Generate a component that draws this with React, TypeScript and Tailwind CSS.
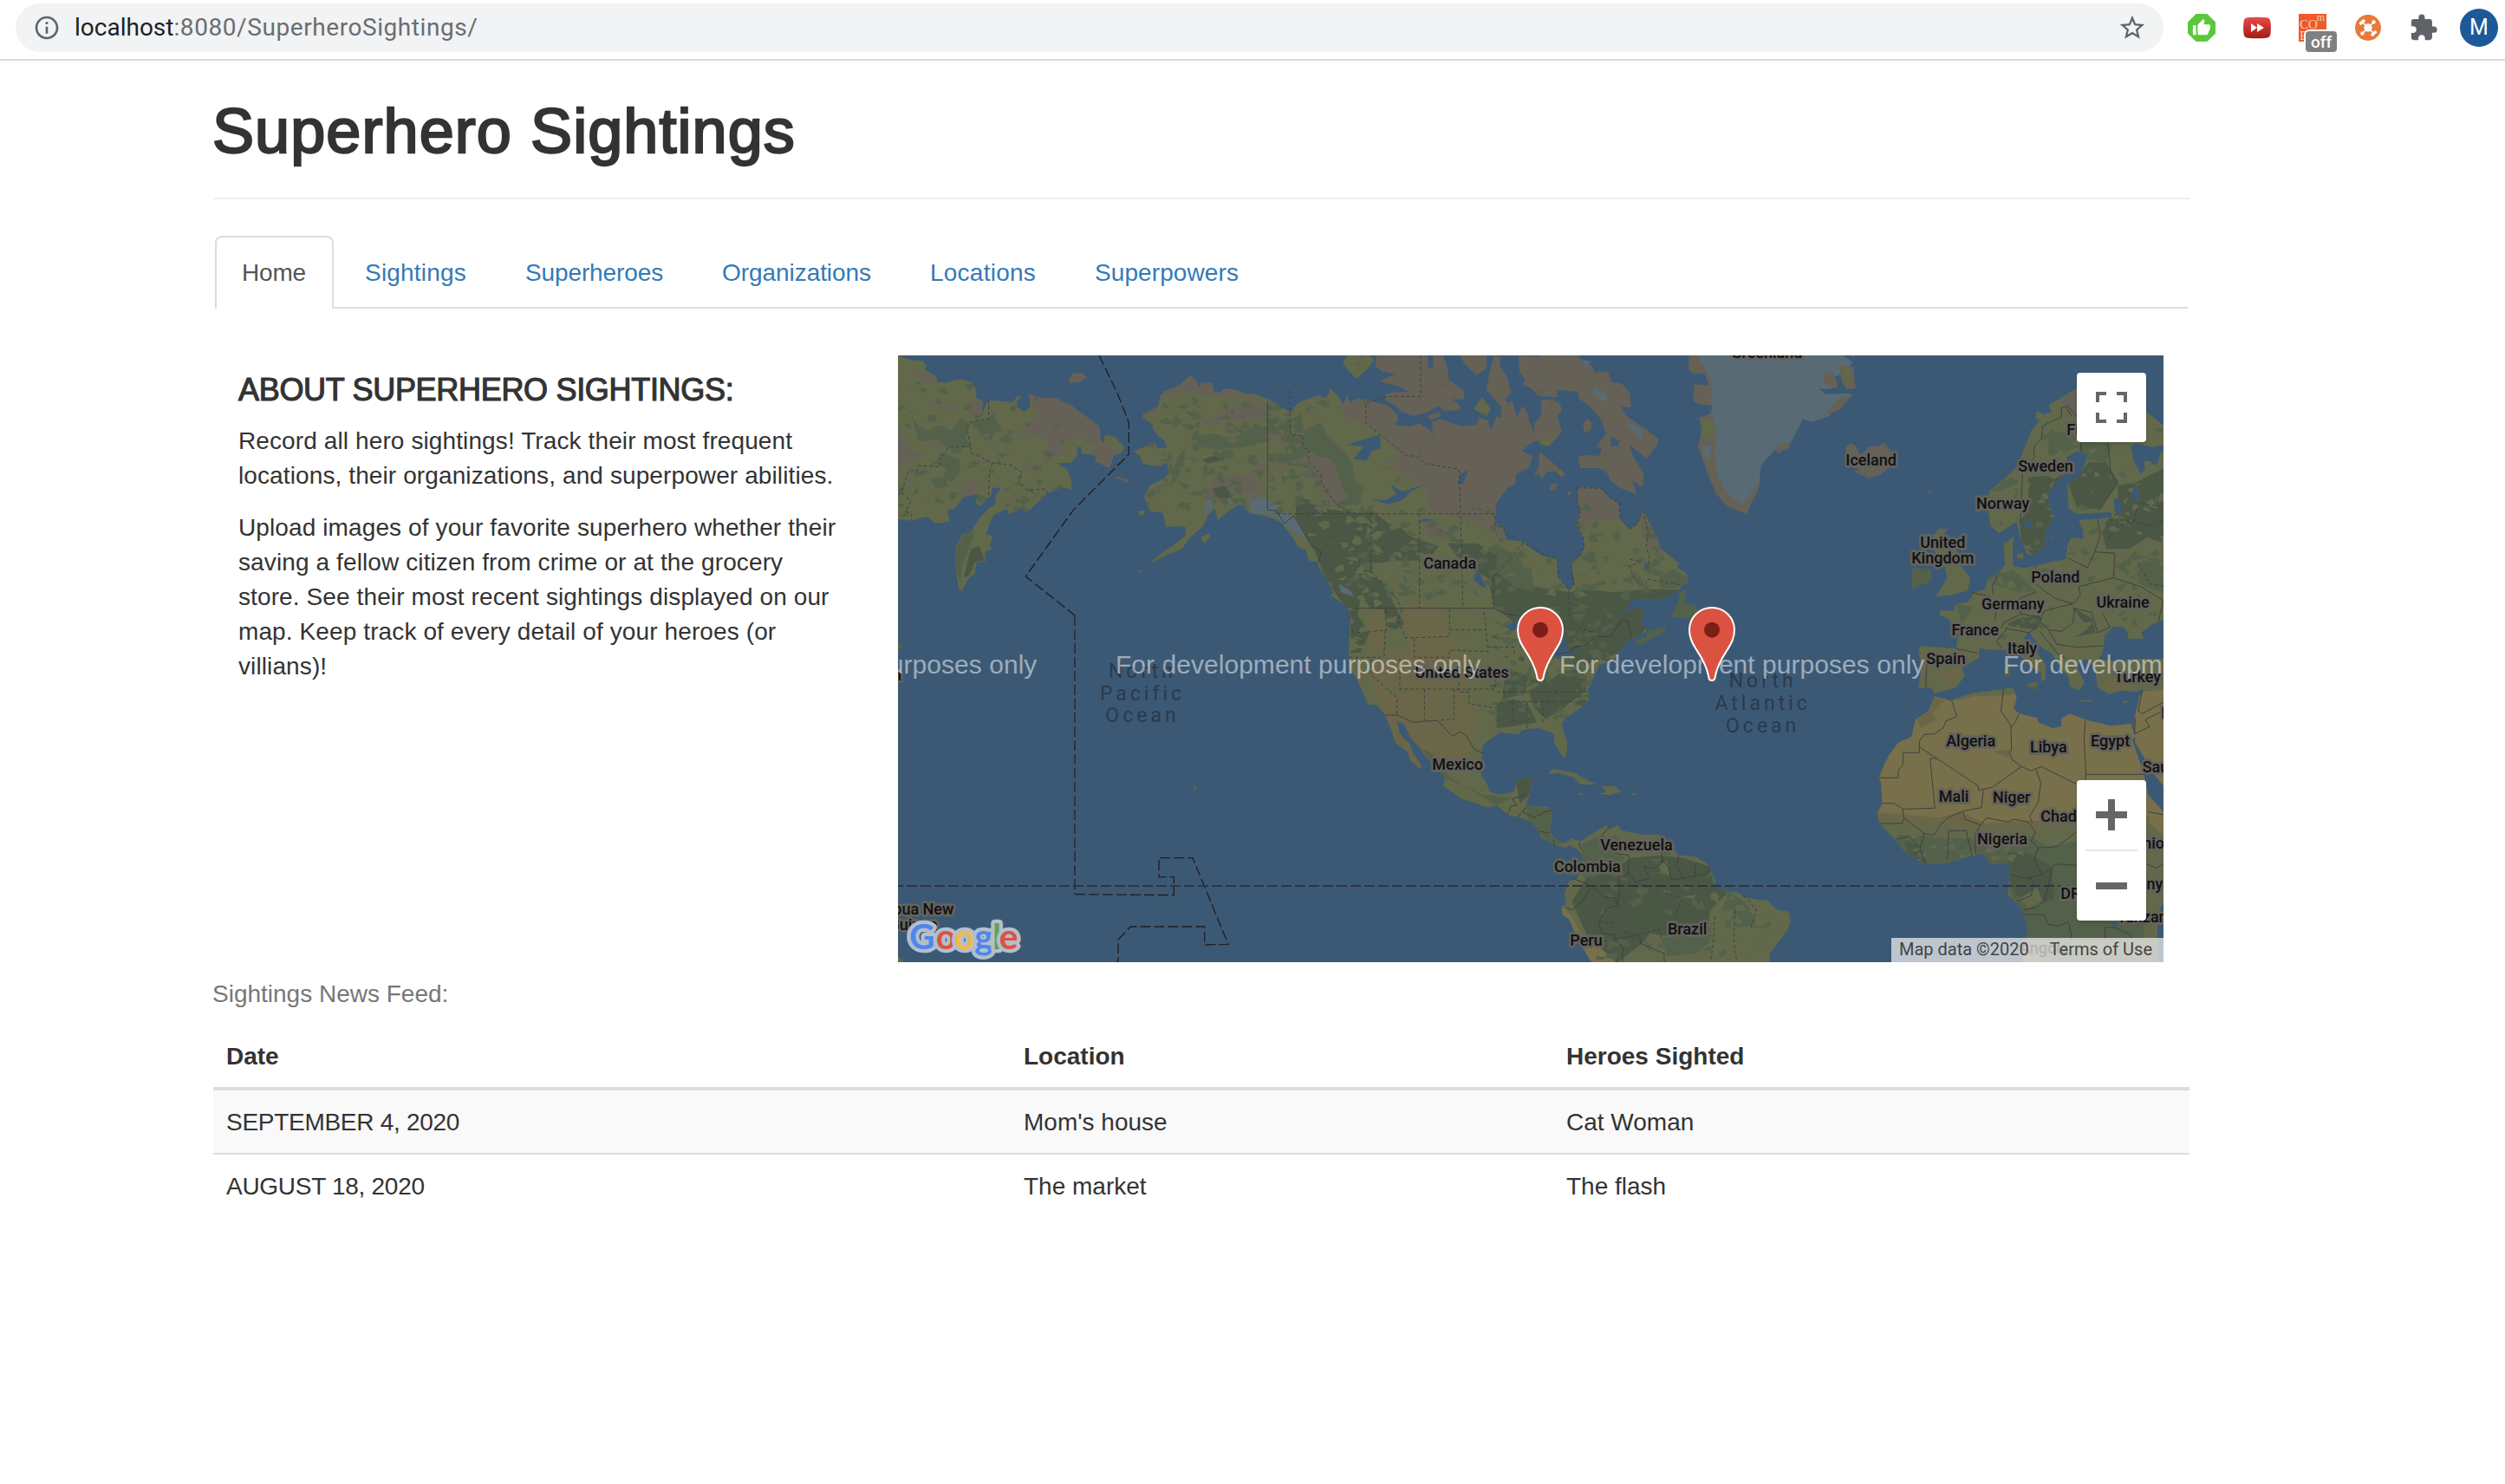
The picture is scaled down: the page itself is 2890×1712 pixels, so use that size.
import { useMemo, type ReactNode } from "react";
import { MdExtension, MdInfoOutline, MdStarBorder, MdThumbUp } from "react-icons/md";

/* Map geometry is kept in thirds of a pixel, grouped in six tiles. */
const TILE = {
  A: [0, 0],
  B: [1500, 0],
  C: [3000, 0],
  D: [0, 1050],
  E: [1500, 1050],
  F: [3000, 1050],
} as const;
type Tile = keyof typeof TILE;

function shape(...parts: [Tile, string][]) {
  return parts
    .map(([t, pts]) =>
      pts
        .trim()
        .split(/\s+/)
        .map((p) => {
          const [x, y] = p.split(",").map(Number);
          return `${x + TILE[t][0]},${y + TILE[t][1]}`;
        })
        .join(" "),
    )
    .join(" ");
}

const OCEAN = "#3b5975";
const GREEN = "#62694b";
const TUNDRA = "#666157";
const FOREST = "#4b5745";
const WOOD = "#54614a";
const TAN = "#6c6649";
const DESERT = "#78704b";
const ICE = "#586b75";

const AMERICA = shape(
  ["A", "865,235 920,205 925,170 940,155 990,135 1030,100 1050,115 1062,140 1070,125 1105,125 1110,155 1130,158 1150,145 1190,150 1215,162 1260,165 1310,187 1345,210 1380,228 1400,195 1470,167 1500,178"],
  ["B", "15,145 35,165 60,200 75,165 80,195 105,180 135,183 215,205 245,235 250,255 235,270 290,277 325,265 370,300 365,260 400,250 420,262 470,275 520,270 530,247 560,255 570,295 578,270 590,240 600,248 635,190 645,190 660,245 680,205 700,235 700,252 720,300 722,265 745,235 745,185 785,182 810,200 815,225 800,240 815,295 770,345 745,340 735,325 715,330 675,360 715,380 700,420 655,440 655,475 630,485 600,525 587,545 585,610 610,622 625,670 680,672 720,705 750,725 800,732 800,790 840,842 860,820 845,745 880,725 895,690 885,650 862,615 880,575 870,530 870,490 890,485 950,490 975,520 1015,545 1018,595 1050,632 1075,615 1095,565 1130,630 1145,660 1160,700 1222,750 1215,760 1250,790 1250,815 1220,840 1180,870 1110,872 1060,875 1020,925 985,955 1050,908 1080,905 1105,910 1090,950 1110,985 1060,1010 1040,1020 1010,1060"],
  ["E", "990,40 945,50 930,85 915,120 905,135 910,170 880,200 830,235 815,255 835,320 830,370 820,372 790,320 788,290 740,270 700,272 675,280 670,292 600,285 545,325 540,345 535,430 555,460 565,490 600,500 650,490 660,450 715,438 705,500 690,540 765,542 782,555 775,630 795,655 825,668 850,652 880,662 915,640 970,605 980,620 1010,607 1025,625 1100,640 1150,638 1180,665 1220,710 1280,715 1325,745 1348,800 1335,812 1375,832 1430,840 1445,855 1500,865"],
  ["F", "25,865 60,900 100,905 107,940 95,975 65,1010 35,1050 35,1085"],
  ["E", "920,1085 900,1050 870,1000 840,930 815,915 817,885 830,880 825,840 840,800 870,790 885,735 883,705 870,690 840,675 830,685 790,675 740,645 740,630 710,595 665,578 630,570 590,538 560,545 520,530 470,515 405,470 410,450 398,425 345,370 325,340 290,300 270,255 245,245 255,290 290,325 300,355 332,400 325,412 290,380 285,355 240,320 225,275 205,225 175,190 145,188 125,140 105,100 80,60 78,0"],
  ["B", "85,930 75,905 45,880 15,860 25,850 0,805"],
  ["A", "1475,765 1470,745 1440,740 1430,705 1400,690 1385,660 1365,635 1340,605 1290,585 1240,578 1200,545 1160,570 1125,600 1115,560 1090,585 1075,620 1030,660 1000,700 950,720 890,750 915,725 980,680 1012,655 1015,625 985,620 945,625 935,575 890,570 880,545 870,520 890,480 940,455 955,440 950,400 920,415 865,405 860,385 835,362 905,330 915,350 950,350 940,325 915,305 890,265 865,245"],
);

const SIBERIA = shape(["A", "18,30 60,45 105,50 117,68 110,80 150,102 155,122 185,125 215,115 245,113 275,125 290,150 288,178 312,190 310,235 325,195 335,185 415,192 430,172 447,172 430,185 430,208 455,225 475,210 472,165 510,177 565,177 620,205 715,275 720,325 732,332 733,305 770,312 802,350 790,370 765,375 750,420 703,398 700,375 655,370 650,345 637,350 640,375 615,403 568,402 605,425 620,465 618,495 585,487 540,505 495,545 460,575 445,560 400,580 395,560 350,582 340,600 322,650 345,655 335,690 345,700 318,710 322,745 290,745 285,785 262,800 240,845 228,840 217,760 217,695 240,650 270,640 295,600 330,560 355,548 355,515 375,490 345,487 340,515 300,552 288,540 292,512 245,520 215,560 190,565 197,605 150,612 115,587 65,602 45,600 18,598"]);

const EUROPE = shape(
  ["C", "795,500 850,455 895,410 915,355 940,290 970,255 955,245 958,222 985,235 1010,225 1000,200 1045,177 1070,160 1100,145 1340,225 1400,275 1400,340 1360,347 1300,335 1285,345 1295,395 1320,440 1335,425 1330,395 1350,395 1365,410 1380,400 1385,370 1400,360 1400,1080"],
  ["F", "1400,140 1320,138 1300,145 1250,140 1210,153 1170,130 1160,60 1130,30 1095,50 1125,115 1105,140 1075,125 1070,95 1040,60 1010,10"],
  ["C", "980,1045 950,1010 930,985 915,1010 960,1060 985,1090"],
  ["F", "990,60 990,100 975,110 975,80 930,50 895,10"],
  ["C", "860,1050 790,1048 760,1045 760,1080"],
  ["F", "755,30 700,60 710,90 680,130 605,150 595,130 550,132 560,60 550,0"],
  ["C", "545,1055 560,1035 680,1045 690,990 650,940 625,930 625,912 670,915 680,890 720,885 745,850 780,840 790,805 825,785 850,755 845,685 880,655 875,720 880,760 910,765 950,760 1010,745 1060,735 1065,690 1080,660 1120,665 1120,640 1105,600 1170,595 1220,590 1215,572 1100,580 1070,560 1065,480 1110,440 1130,395 1135,375 1100,360 1065,380 1055,440 1000,500 1000,540 1020,590 990,640 985,695 945,725 925,715 905,670 890,605 830,645 800,620 790,560"],
);

const AFRICA = shape(["F", "605,160 660,175 735,150 845,135 875,130 890,165 880,205 900,220 960,235 965,250 1015,270 1045,265 1045,235 1075,220 1125,240 1215,262 1285,255 1300,300 1290,310 1320,400 1335,450 1345,500 1398,560 1398,865 1375,930 1380,1080 910,1080 930,960 905,890 860,845 865,800 870,755 850,735 800,742 775,705 725,712 660,735 575,742 500,695 475,660 415,600 408,562 425,530 420,460 413,440 430,400 450,360 480,320 525,300 540,240 585,210 600,175"]);
const ARABIA = shape(["F", "1315,160 1330,140 1398,138 1398,470 1365,430 1335,380 1300,320 1297,240"]);

const ISLANDS: [string, string][] = [
  [TUNDRA, shape(["A", "608,115 625,92 655,90 672,105 645,122 612,126"])],
  [TUNDRA, shape(["A", "772,447 815,460 808,472 790,458 772,457"])],
  [GREEN, shape(["A", "845,570 868,567 874,580 858,583"])],
  [GREEN, shape(["A", "1065,660 1095,645 1098,660 1078,680"])],
  [GREEN, shape(["A", "848,773 862,775 850,783"])],
  [WOOD, shape(["A", "18,1020 38,1035 20,1050"])],
  [GREEN, shape(["B", "75,30 150,30 165,45 145,75 105,110 70,75 57,55"])],
  [TUNDRA, shape(["B", "175,30 350,30 355,75 370,72 370,30 405,30 420,75 425,115 475,150 478,180 440,185 465,205 460,220 410,222 385,205 355,225 300,240 260,225 240,205 205,185 205,165 240,155 290,158 250,135 215,130 185,118 240,95 195,85 170,70"])],
  [TUNDRA, shape(["B", "460,30 555,30 555,75 520,100 480,60"])],
  [TUNDRA, shape(["B", "580,30 605,35 600,65 625,100 640,160 620,180 635,210 605,235 605,205 590,190 555,150 565,90"])],
  [GREEN, shape(["B", "540,175 570,215 555,240 510,215"])],
  [TUNDRA, shape(["B", "350,240 395,222 395,240 365,255"])],
  [TUNDRA, shape(["B", "665,30 735,35 752,90 735,30 875,30 885,55 920,65 930,90 975,85 985,120 1025,130 1050,160 1055,210 1020,208 1040,240 1105,285 1150,320 1145,340 1110,387 1050,340 1060,375 1100,440 1095,485 1060,465 1075,510 1020,490 980,460 975,440 950,420 880,420 870,380 905,375 945,378 955,355 935,345 970,300 950,250 905,200 875,180 870,155 800,150 800,175 735,170 710,145 680,130 690,115 670,90"])],
  [TUNDRA, shape(["B", "888,265 905,250 920,265 915,290 895,297"])],
  [TUNDRA, shape(["B", "740,365 755,375 805,420 830,440 815,452 790,430 760,435 745,462 740,440 720,445 735,415"])],
  [TUNDRA, shape(["B", "780,475 802,475 790,495 772,495"])],
  [TUNDRA, shape(["B", "835,500 848,503 840,518"])],
  [WOOD, shape(["B", "1248,838 1240,885 1285,898 1290,940 1190,938 1215,890 1225,850"])],
  [WOOD, shape(["B", "1070,1020 1110,1000 1110,985 1150,975 1178,960 1175,985 1130,1010 1080,1035"])],
  [GREEN, shape(["E", "765,430 785,410 860,425 885,440 935,465 880,465 855,440 805,425"])],
  [GREEN, shape(["E", "950,470 1000,472 1022,490 980,502 945,497 970,490"])],
  [GREEN, shape(["E", "870,495 895,499 880,504"])],
  [GREEN, shape(["E", "1057,496 1078,497 1075,502 1058,502"])],
  [GREEN, shape(["D", "1042,467 1055,480 1042,480"])],
  [GREEN, shape(["D", "18,1058 40,1080 18,1080"])],
  [TUNDRA, shape(["C", "298,350 315,333 335,345 345,372 355,370 380,345 410,345 430,332 470,380 460,410 420,440 380,455 325,432 345,425 305,400"])],
  [GREEN, shape(["C", "610,865 650,800 640,760 600,700 600,655 620,630 650,630 635,655 680,700 700,765 730,800 720,845 660,860"])],
  [WOOD, shape(["C", "530,765 595,770 595,810 530,838 525,820"])],
  [GREEN, shape(["C", "583,496 593,498 588,508"])],
  [WOOD, shape(["C", "890,718 912,715 915,735 895,738"])],
  [WOOD, shape(["C", "1012,655 1023,650 1015,675"])],
  [WOOD, shape(["F", "918,118 965,110 955,140"])],
  [WOOD, shape(["F", "848,60 868,45 865,95 845,90"])],
  [GREEN, shape(["F", "1108,173 1150,173 1148,178 1110,178"])],
  [GREEN, shape(["F", "1255,178 1283,172 1265,184"])],
];

const GREENLAND: [string, string][] = [
  [TUNDRA, shape(["B", "1255,30 1290,30 1345,110 1350,200 1345,240 1360,285 1355,335 1350,370 1375,440 1405,515 1440,540 1480,480 1500,460 1500,480 1478,530 1455,580 1430,570 1385,548 1350,510 1320,440 1300,380 1287,345 1300,290 1290,245 1325,235 1338,205 1310,200 1290,200 1270,185 1275,130 1325,135 1310,90 1275,95 1255,80"])],
  [ICE, shape(["B", "1283,30 1310,75 1335,120 1335,210 1340,240 1350,290 1345,370 1355,440 1378,490 1405,520 1440,545 1475,500 1500,460"], ["C", "5,410 50,360 110,330 150,250 185,260 240,240 270,200 320,165 230,150 265,140 250,110 290,90 320,60 325,30"])],
  [TUNDRA, shape(["C", "215,95 250,85 270,130 265,145 225,130"])],
  [TUNDRA, shape(["C", "275,65 325,70 332,145 300,148 285,120"])],
  [GREEN, shape(["C", "280,75 305,70 315,110 300,140 285,110"])],
  [TUNDRA, shape(["C", "322,165 280,215 220,243 250,205 275,180"])],
  [TUNDRA, shape(["C", "60,335 108,330 100,350 60,370"])],
  [GREEN, shape(["B", "1305,250 1345,260 1350,300 1320,330 1300,300"])],
  [ICE, shape(["B", "1305,340 1335,345 1325,390 1305,370"])],
  [OCEAN, shape(["C", "290,30 325,55 320,30"])],
  [OCEAN, shape(["C", "205,145 280,150 330,152 320,160 230,165"])],
];

/* Vegetation zones, painted inside the land mask. */
const ZONES: [string, string][] = [
  [TUNDRA, shape(["A", "75,85 150,102 155,130 100,118"])],
  [TUNDRA, shape(["A", "265,185 312,190 305,235 265,228"])],
  [TUNDRA, shape(["A", "472,165 565,177 620,205 715,275 718,330 690,340 640,310 600,330 560,335 510,310 435,288 480,260 510,235 480,205"])],
  [TUNDRA, shape(["A", "700,345 725,330 760,350 790,372 765,375 750,420 703,398"])],
  [TUNDRA, shape(["A", "18,310 60,340 75,365 45,400 18,420"])],
  [TUNDRA, shape(["A", "540,325 580,315 590,350 560,380 530,400"])],
  [TUNDRA, shape(["A", "235,500 260,470 290,460 292,512 240,522"])],
  [WOOD, shape(["A", "65,240 85,270 120,290 165,270 200,290 240,245 262,265 255,320 275,345 230,350 190,350 150,320 105,330 80,300"])],
  [WOOD, shape(["A", "270,262 330,250 348,230 365,265 380,290 350,300 340,325 318,320 290,285"])],
  [WOOD, shape(["A", "165,365 230,390 235,430 205,470 175,450 185,425 150,400"])],
  [WOOD, shape(["A", "130,460 180,450 195,480 150,492"])],
  [WOOD, shape(["A", "217,700 250,645 285,640 240,760 235,820 220,780"])],
  [FOREST, shape(["A", "270,700 300,690 320,740 285,745 265,790 245,800"])],
  [TUNDRA, shape(["A", "865,235 930,165 1030,100 1100,125 1150,145 1215,165 1190,178 1080,170 1020,155 940,170 920,215 870,250"])],
  [TUNDRA, shape(["A", "1060,260 1130,235 1180,205 1235,190 1310,195 1345,215 1270,245 1160,260 1090,270"])],
  [TUNDRA, shape(["A", "1070,500 1110,460 1180,440 1260,460 1300,500 1250,500 1180,515 1120,510 1085,540"])],
  [WOOD, shape(["A", "1050,310 1110,300 1180,320 1230,285 1320,270 1345,300 1290,330 1200,350 1120,355 1060,345"])],
  [FOREST, shape(["A", "1070,390 1150,365 1145,390 1090,405"])],
  [WOOD, shape(["A", "960,480 985,380 1015,350 1005,420 975,470"])],
  [FOREST, shape(["A", "1105,490 1150,480 1175,520 1130,535"])],
  [ICE, shape(["A", "1080,540 1110,520 1100,570 1085,580"])],
  [ICE, shape(["A", "1150,535 1200,525 1230,545 1230,560 1190,545"])],
  [ICE, shape(["A", "1235,505 1300,530 1345,560 1395,600 1440,650 1490,700 1470,705 1430,665 1360,620 1310,580 1240,575"])],
  [WOOD, shape(["A", "1390,250 1410,225 1425,290 1480,260 1500,300 1560,360 1590,400 1600,480 1620,540 1540,560 1500,480 1440,420 1300,400 1300,370 1390,370 1350,330 1390,300"])],
  [TUNDRA, shape(["A", "1370,400 1440,375 1530,390 1570,430 1575,500 1530,520 1490,480 1440,410"])],
  [FOREST, shape(["A", "1395,520 1440,530 1500,570 1500,810 1470,730 1395,590"])],
  [FOREST, shape(["B", "-10,560 120,575 150,560 200,600 250,620 300,660 390,690 350,740 250,740 160,750 160,790 200,820 270,960 240,980 190,960 150,900 120,860 110,930 150,990 120,1060 85,1060 85,930 0,805"])],
  [TUNDRA, shape(["B", "50,200 80,180 135,183 215,205 250,250 325,265 420,255 530,247 640,180 815,182 815,300 720,330 720,420 655,475 587,545 587,620 490,600 400,580 360,570 345,490 290,460 210,400 260,380 190,300 120,260 70,250"])],
  [TUNDRA, shape(["B", "870,485 950,488 1020,545 1010,600 940,600 890,640 860,620"])],
  [TUNDRA, shape(["B", "1090,570 1140,650 1170,710 1150,730 1110,690 1090,640"])],
  [TUNDRA, shape(["B", "500,590 585,580 625,670 580,650"])],
  [TUNDRA, shape(["B", "330,600 400,620 420,660 360,665"])],
  [TUNDRA, shape(["B", "-30,380 40,410 80,520 30,545 -40,480"])],
  [WOOD, shape(["B", "0,340 60,370 90,450 130,490 110,560 60,500 30,410"])],
  [FOREST, shape(["B", "420,680 520,680 600,720 700,770 720,830 840,850 900,840 1000,850 1100,840 1220,840 1060,1030 1010,1060 870,1110 760,1060 620,930 580,900 560,800 480,760"])],
  [WOOD, shape(["B", "590,690 640,710 710,770 720,850 650,830 590,780"])],
  [WOOD, shape(["B", "1150,800 1200,770 1250,800 1240,830 1160,840"])],
  [TUNDRA, shape(["B", "205,80 330,60 330,160 240,150"])],
  [TAN, shape(["B", "130,905 200,910 215,990 190,1060 140,1060 150,970"])],
  [TAN, shape(["B", "270,900 330,880 400,920 420,1000 470,1060 500,1110 480,1200 500,1300 350,1400 280,1290 180,1230 150,1130 200,1050 300,1050 270,970"])],
  [TAN, shape(["E", "190,190 300,210 440,240 530,200 490,380 450,440 380,400 330,340 250,280 300,350 330,410 290,380 240,320"])],
  [FOREST, shape(["E", "590,180 650,170 700,190 730,250 640,265 590,270"])],
  [FOREST, shape(["E", "700,140 760,110 840,70 900,90 900,140 820,200 760,240 720,200"])],
  [FOREST, shape(["E", "620,60 700,90 690,150 610,170"])],
  [WOOD, shape(["E", "330,340 370,360 430,440 540,500 640,510 590,540 480,470 400,440"])],
  [FOREST, shape(["E", "655,450 715,438 705,500 670,530"])],
  [WOOD, shape(["E", "690,540 782,548 775,640 850,660 790,680 700,600"])],
  [WOOD, shape(["E", "885,670 960,640 1000,700 1040,720 900,800 880,760"])],
  [FOREST, shape(["E", "900,790 1000,760 1050,720 1150,710 1240,720 1330,750 1340,810 1390,840 1330,900 1320,970 1250,1000 1120,980 1100,1010 1010,1080 950,1080 890,960 850,870"])],
  [WOOD, shape(["E", "1160,1000 1330,960 1340,1000 1280,1050 1180,1060"])],
  [DESERT, shape(["E", "815,885 850,920 880,980 960,1040 1010,1085 920,1085 870,1000 820,915"])],
  [GREEN, shape(["E", "1150,740 1180,730 1190,780 1160,775"])],
  [GREEN, shape(["E", "1225,855 1285,845 1270,860"])],
  [WOOD, shape(["E", "1390,840 1450,870 1500,960 1420,960 1370,900"])],
  [FOREST, shape(["C", "930,450 1060,445 1000,540 1020,590 985,695 945,725 905,670 900,600 930,570"])],
  [FOREST, shape(["C", "1070,480 1140,400 1200,400 1240,470 1180,560 1100,560"])],
  [FOREST, shape(["C", "1240,480 1300,470 1400,420 1400,680 1340,660 1280,700 1200,700 1180,620 1240,570"])],
  [WOOD, shape(["C", "1000,290 1100,300 1220,340 1200,400 1130,390 1100,350 1000,380"])],
  [TUNDRA, shape(["C", "1040,190 1100,145 1100,240 1060,210"])],
  [WOOD, shape(["C", "800,500 870,450 900,470 830,500"])],
  [WOOD, shape(["C", "780,800 850,760 900,790 960,850 900,850 830,830"])],
  [WOOD, shape(["C", "680,890 740,900 700,960"])],
  [FOREST, shape(["C", "850,960 900,940 970,930 960,980 880,970"])],
  [FOREST, shape(["C", "1080,900 1150,940 1165,990 1090,1005 1140,975"])],
  [WOOD, shape(["C", "1230,760 1300,720 1400,740 1400,850 1330,830"])],
  [TAN, shape(["F", "630,80 690,60 690,110 640,120"])],
  [TAN, shape(["F", "1200,100 1300,115 1290,135 1210,140"])],
];

const AFRICA_ZONES: [string, string][] = [
  [GREEN, shape(["F", "660,175 735,150 845,135 880,130 880,155 740,160 690,175"])],
  [TAN, shape(["F", "605,160 640,175 600,215 610,240 560,270 545,245"])],
  [TAN, shape(["F", "400,560 500,570 620,580 700,560 780,600 940,590 1100,590 1260,560 1398,580 1398,1080 400,1080"])],
  [GREEN, shape(["F", "400,585 500,590 600,610 760,620 940,620 1100,600 1240,600 1300,640 1398,600 1398,1080 400,1080"])],
  [WOOD, shape(["F", "470,640 540,640 620,650 760,650 930,640 1000,680 1100,660 1240,680 1330,760 1330,1000 900,1000 860,800 500,800"])],
  [FOREST, shape(["F", "860,700 930,700 1010,750 1020,860 960,880 890,850 860,780"])],
  [FOREST, shape(["F", "500,660 560,680 580,740 520,710"])],
  [GREEN, shape(["F", "900,860 960,820 980,870 930,890"])],
  [DESERT, shape(["F", "910,1060 960,1050 1000,1085 900,1085"])],
  [DESERT, shape(["F", "1345,560 1398,560 1398,640 1350,600"])],
  [TAN, shape(["F", "810,350 870,345 860,372"])],
];

const LAKES = [
  shape(["B", "70,340 130,320 185,305 190,350 160,360 140,395 95,388 130,345"]),
  shape(["B", "155,528 205,530 245,510 220,478 265,500 340,478 295,500 265,530 215,545"]),
  shape(["B", "305,622 335,595 385,600 330,607"]),
  shape(["B", "455,475 465,440 492,425 475,475"]),
  shape(["B", "510,790 530,780 555,838 530,825 515,810"]),
  shape(["B", "510,835 530,870 518,860"]),
  shape(["B", "520,548 545,570 530,565"]),
  shape(["B", "620,965 700,935 720,950 640,985"]),
  shape(["B", "1185,985 1100,930 1150,930 1165,950"]),
  shape(["B", "820,990 840,1060 890,1040 840,1070 790,1075"]),
  shape(["B", "985,312 1015,325 1010,345 985,345"]),
  shape(["B", "1100,750 1112,745 1112,770"]),
  shape(["B", "385,810 400,790 395,805"]),
  shape(["C", "1190,1045 1195,1000 1225,968 1260,970 1275,990 1275,1010 1330,1010 1320,990 1360,960 1398,945 1398,1080 1190,1080"]),
  shape(["F", "1175,30 1190,0 1398,0 1398,25 1300,30 1240,40"]),
  shape(["C", "1225,520 1255,540 1250,578 1230,575"]),
  shape(["C", "1295,475 1318,510 1300,540 1288,520"]),
  shape(["C", "910,605 940,600 940,625 915,630"]),
  shape(["F", "695,675 705,675 703,700"]),
  shape(["F", "1218,940 1240,950 1230,970"]),
];
const ICECAPS = [
  shape(["B", "925,140 970,165 975,190 950,185 930,165"]),
  shape(["B", "1040,262 1090,285 1090,320 1065,300"]),
  shape(["B", "880,45 915,50 900,75"]),
  shape(["B", "45,820 85,845 95,865 50,850"]),
  shape(["B", "195,815 215,835 210,845"]),
];

const DASHED = [
  shape(["A", "332,185 332,248 265,262 258,290 270,345 268,365 345,402 410,410 447,435 435,470 465,497 530,492 535,510"]),
  shape(["A", "345,402 335,430 332,515"]),
  shape(["A", "270,345 195,348 165,385 165,415 88,412 85,428 55,428 30,505 62,535 45,570 65,578 65,600"]),
  shape(["A", "1373,150 1376,305 1418,308 1423,350 1440,355 1440,400 1482,440 1485,470 1500,500"]),
  shape(["A", "1500,500 1535,545 1590,578"]),
  shape(["B", "327,30 327,172 210,172 137,195 137,265 280,378 310,378 345,405 460,424 465,578 473,905"]),
  shape(["A", "1330,578 2083,578 2085,615 2112,625 2128,648 2185,680 2245,715 2298,732"]),
  shape(["B", "155,578 155,775 240,865 262,910"]),
  shape(["B", "323,578 323,905"]),
  shape(["B", "683,680 578,798 578,905"]),
  shape(["B", "870,488 868,535 880,580 865,615 888,650 893,690 880,722 845,748 858,825 840,840 805,800 800,735"]),
  shape(["B", "870,488 950,490 1015,545 1018,595 1050,630 1075,615 1095,568 1115,640 1108,690 1120,735 1113,770"]),
  shape(["B", "840,842 842,940 880,975 930,990"]),
  shape(["B", "1050,735 1090,745 1050,760 1065,800 1100,830 1115,805 1230,825"]),
  shape(["B", "85,985 120,990 210,980 205,910"]),
  shape(["B", "205,980 200,1075"]),
  shape(["B", "262,910 250,950 275,1008 427,1003 427,905"]),
  shape(["B", "427,980 555,980 545,905"]),
  shape(["B", "305,1008 305,1075 427,1075 427,1050 560,1055 553,980"]),
  shape(["B", "560,1040 650,1040 650,1062"]),
  shape(["E", "80,25 190,25"]),
  shape(["E", "155,30 155,85 245,165 245,225"]),
  shape(["E", "255,30 255,135 585,135 585,75"]),
  shape(["E", "340,135 340,248"]),
  shape(["E", "443,135 443,240 385,242"]),
  shape(["E", "460,70 460,145 495,145 495,185 590,200"]),
  shape(["E", "590,145 905,145"]),
  shape(["E", "640,178 860,178"]),
  shape(["E", "695,178 695,270"]),
  shape(["E", "748,178 750,255"]),
  shape(["E", "645,180 645,250"]),
  shape(["E", "1130,800 1170,840 1230,860 1205,930"]),
  shape(["E", "945,938 1000,945 1030,975 1080,985 1150,965 1160,995"]),
  shape(["E", "1345,920 1340,1010 1330,1080"]),
  shape(["E", "1415,900 1410,1000 1420,1070"]),
  shape(["E", "1445,850 1490,900 1470,960"]),
  shape(["C", "1210,600 1300,600 1310,540 1398,555"]),
  shape(["C", "1210,660 1240,620 1300,605 1350,620 1398,600"]),
  shape(["C", "1310,750 1350,820 1398,830"]),
];

const SOLID = [
  shape(["A", "1297,187 1297,565 1328,567 1355,612 1388,585 1450,690 1483,708 1473,745"]),
  shape(["B", "95,905 578,905 620,925 665,930"]),
  shape(["B", "790,1065 850,1055 855,1040 895,1035 930,1003 985,1003 1022,947 1045,950 1058,1010"]),
  shape(["E", "205,225 245,225 300,250 385,243 410,270 437,298 462,283 483,292 513,345 543,357"]),
  shape(["E", "630,565 640,540 660,538 643,515 690,500"]),
  shape(["E", "665,578 690,545 680,560 720,580 755,560 780,555"]),
  shape(["E", "740,628 772,632"]),
  shape(["E", "785,655 792,678"]),
  shape(["E", "875,665 882,690"]),
  shape(["E", "980,610 955,640 960,670 1010,705 1048,710 1045,780 1012,785 1015,815 1010,885 975,892 942,940 955,980 1000,985 1000,1000 1028,1030 1025,1080"]),
  shape(["E", "855,790 915,815 965,855 1005,860 1005,880"]),
  shape(["E", "915,825 890,865 850,900 830,890"]),
  shape(["E", "1048,770 1070,803 1118,790 1100,748 1130,758 1165,735 1160,700"]),
  shape(["E", "1165,730 1185,750 1195,795 1320,775 1325,745"]),
  shape(["E", "1220,712 1212,748 1235,785"]),
  shape(["E", "1277,745 1277,785"]),
  shape(["E", "1000,1000 1085,985 1088,1015 1170,1050 1170,1080"]),
  shape(["C", "903,610 910,440 950,385 950,345 975,320 980,275 1010,258 1045,245 1045,210 1065,205 1110,255 1113,365"]),
  shape(["C", "1060,210 1080,240"]),
  shape(["C", "1205,330 1215,430 1240,470 1175,565"]),
  shape(["C", "1170,595 1180,650 1160,710 1135,765 1065,730"]),
  shape(["C", "1160,710 1230,715 1225,800 1105,830 1110,860 1085,890"]),
  shape(["C", "1225,800 1320,830 1398,880 1380,950"]),
  shape(["C", "955,760 955,820 1020,870 1085,890 1040,900 985,915"]),
  shape(["C", "955,850 900,870 905,925 845,955 835,975"]),
  shape(["C", "735,850 800,865 820,900 815,945"]),
  shape(["C", "825,790 805,830 810,860"]),
  shape(["C", "985,915 970,950 1000,980 1045,985 1085,955 1090,905"]),
  shape(["C", "905,925 970,935 970,960 935,990 850,975"]),
  shape(["C", "1085,905 1150,920 1170,990 1213,970 1185,920"]),
  shape(["C", "1000,980 1030,1030 1100,1040 1190,1035"]),
  shape(["C", "970,985 1030,1060 1060,1080"]),
  shape(["C", "680,1045 755,1060"]),
  shape(["C", "860,970 820,1020 840,1045"]),
  shape(["F", "580,25 575,130"]),
  shape(["F", "665,175 683,230 645,245 635,270 605,290 570,292 553,315 553,335 757,470 757,485"]),
  shape(["F", "553,335 553,355 497,355 495,400 480,415 480,442 413,442"]),
  shape(["F", "615,375 590,375 607,547 498,550 465,530 425,530"]),
  shape(["F", "757,485 805,475 907,403 940,418 975,403 1100,465"]),
  shape(["F", "845,135 835,210 870,260 872,345 865,355 875,380 907,403"]),
  shape(["F", "898,218 885,250 868,270"]),
  shape(["F", "1128,245 1123,300 1130,430 1335,430"]),
  shape(["F", "1128,430 1128,455"]),
  shape(["F", "958,415 973,460 965,525 935,575 945,600"]),
  shape(["F", "775,485 768,545 705,557 655,578 625,605 605,640 570,635 500,580 495,550"]),
  shape(["F", "705,560 710,585 765,605 785,580 860,595 880,585 930,595 955,630 940,660 965,685 1030,680 1095,630"]),
  shape(["F", "765,605 745,640 748,705"]),
  shape(["F", "655,625 650,725"]),
  shape(["F", "655,625 715,625 735,710"]),
  shape(["F", "570,635 555,690 575,740"]),
  shape(["F", "475,655 520,645 550,680"]),
  shape(["F", "415,600 495,600 500,580"]),
  shape(["F", "965,685 950,720 978,778 925,790 870,778"]),
  shape(["F", "925,785 950,800 940,850 890,870"]),
  shape(["F", "978,778 1010,755 1020,740 1098,745"]),
  shape(["F", "1015,755 985,870 960,890 910,900"]),
  shape(["F", "915,915 985,915 1000,950 1035,955 1070,940 1080,995"]),
  shape(["F", "1195,1000 1195,960 1230,960 1285,985 1285,1000"]),
  shape(["F", "1325,140 1310,210 1325,220 1398,180"]),
  shape(["F", "1300,235 1298,290 1350,265 1335,240 1398,210"]),
  shape(["F", "1345,560 1398,570"]),
  shape(["F", "1340,740 1375,755 1398,740"]),
];

const DATELINE = shape(["A", "714,30 775,155 817,262 817,372 625,565 460,795 630,930"]);
const EXCLAVE = shape(["D", "630,845 973,848 973,785 921,785 921,719 1038,719 1161,1018 1079,1020 1079,957 823,957 780,1002 780,1075 770,1085"]);

const LABELS: [Tile, number, number, string, ("start" | "middle" | "end")?][] = [
  ["B", 1525, 40, "Greenland"],
  ["C", 386, 411, "Iceland"],
  ["C", 990, 432, "Sweden"],
  ["C", 842, 562, "Norway"],
  ["C", 634, 697, "United"],
  ["C", 634, 751, "Kingdom"],
  ["C", 1024, 817, "Poland"],
  ["C", 877, 909, "Germany"],
  ["C", 1257, 904, "Ukraine"],
  ["C", 746, 999, "France"],
  ["C", 909, 1063, "Italy"],
  ["C", 1063, 305, "Finland", "start"],
  ["F", 645, 48, "Spain"],
  ["F", 1308, 112, "Turkey"],
  ["F", 731, 334, "Algeria"],
  ["F", 1000, 354, "Libya"],
  ["F", 1214, 332, "Egypt"],
  ["F", 672, 526, "Mali"],
  ["F", 872, 529, "Niger"],
  ["F", 973, 595, "Chad", "start"],
  ["F", 840, 673, "Nigeria"],
  ["F", 1042, 860, "DRC", "start"],
  ["F", 1325, 422, "Saudi", "start"],
  ["F", 1278, 688, "Ethiopia", "start"],
  ["F", 1277, 827, "Kenya", "start"],
  ["F", 1237, 943, "Tanzania", "start"],
  ["F", 1390, 237, "Iraq", "start"],
  ["F", 985, 1050, "Angola"],
  ["B", 428, 767, "Canada"],
  ["E", 470, 95, "United States"],
  ["E", 455, 415, "Mexico"],
  ["E", 1074, 693, "Venezuela"],
  ["E", 904, 768, "Colombia"],
  ["E", 1250, 983, "Brazil"],
  ["E", 900, 1023, "Peru"],
  ["D", 211, 915, "Papua New", "end"],
  ["D", 155, 968, "Guinea", "end"],
  ["D", 30, 105, "Japan", "end"],
];

const SEAS: [Tile, number, number, string][] = [
  ["D", 864, 95, "North"],
  ["D", 864, 173, "Pacific"],
  ["D", 864, 250, "Ocean"],
  ["E", 1511, 130, "North"],
  ["E", 1511, 208, "Atlantic"],
  ["E", 1511, 286, "Ocean"],
];

/* Small relief facets: [x, y, w, h, count, size, colour]. */
const RELIEF: [number, number, number, number, number, number, string][] = [
  [18, 90, 600, 500, 60, 22, WOOD],
  [18, 90, 780, 500, 45, 22, TUNDRA],
  [870, 170, 640, 400, 110, 24, WOOD],
  [870, 170, 640, 400, 40, 20, TUNDRA],
  [1380, 500, 300, 550, 60, 22, GREEN],
  [1560, 560, 900, 300, 120, 22, WOOD],
  [1560, 560, 900, 300, 60, 20, GREEN],
  [1600, 900, 500, 400, 60, 24, GREEN],
  [1600, 30, 1000, 450, 50, 20, "#625e50"],
  [2080, 900, 420, 380, 110, 22, WOOD],
  [2080, 1000, 420, 300, 40, 22, FOREST],
  [2350, 600, 400, 260, 40, 22, WOOD],
  [2300, 1700, 900, 430, 70, 26, WOOD],
  [2830, 1900, 300, 230, 60, 22, GREEN],
  [3780, 250, 620, 800, 130, 22, GREEN],
  [3780, 250, 620, 800, 80, 20, WOOD],
  [3540, 1050, 700, 120, 30, 18, TAN],
  [3420, 1640, 500, 140, 40, 20, GREEN],
];

function relief() {
  let seed = 7;
  const rnd = () => {
    seed = (seed * 16807) % 2147483647;
    return seed / 2147483647;
  };
  return RELIEF.map(([x, y, w, h, n, s, fill]) => {
    let d = "";
    for (let i = 0; i < n; i++) {
      const cx = x + rnd() * w;
      const cy = y + rnd() * h;
      const k = 3 + Math.floor(rnd() * 3);
      for (let j = 0; j < k; j++) {
        const a = ((j + rnd() * 0.8) / k) * Math.PI * 2;
        const r = s * (0.25 + rnd() * 1.1);
        d += `${j ? "L" : "M"}${(cx + Math.cos(a) * r).toFixed(1)} ${(cy + Math.sin(a) * r * 0.7).toFixed(1)}`;
      }
      d += "Z";
    }
    return { d, fill };
  });
}

function MapCanvas() {
  const facets = useMemo(relief, []);
  return (
    <svg className="block h-full w-full" viewBox="18 30 4380 2100" fontFamily="Roboto, sans-serif">
      <defs>
        <clipPath id="land">
          <polygon points={SIBERIA} />
          <polygon points={AMERICA} />
          <polygon points={EUROPE} />
          {ISLANDS.map(([, p], i) => (
            <polygon key={i} points={p} />
          ))}
        </clipPath>
        <clipPath id="africa">
          <polygon points={AFRICA} />
        </clipPath>
      </defs>
      <rect x="0" y="0" width="4420" height="2150" fill={OCEAN} />
      <polygon points={SIBERIA} fill={GREEN} />
      <polygon points={AMERICA} fill={GREEN} />
      <polygon points={EUROPE} fill={GREEN} />
      <polygon points={ARABIA} fill={DESERT} />
      {ISLANDS.map(([c, p], i) => (
        <polygon key={i} points={p} fill={c} />
      ))}
      {GREENLAND.map(([c, p], i) => (
        <polygon key={i} points={p} fill={c} />
      ))}
      <g clipPath="url(#land)">
        {ZONES.map(([c, p], i) => (
          <polygon key={i} points={p} fill={c} />
        ))}
        {facets.map((f, i) => (
          <path key={i} d={f.d} fill={f.fill} />
        ))}
      </g>
      <polygon points={AFRICA} fill={DESERT} />
      <g clipPath="url(#africa)">
        {AFRICA_ZONES.map(([c, p], i) => (
          <polygon key={i} points={p} fill={c} />
        ))}
        <path d={facets[facets.length - 1].d} fill={GREEN} />
      </g>
      {ICECAPS.map((p, i) => (
        <polygon key={i} points={p} fill={ICE} />
      ))}
      {LAKES.map((p, i) => (
        <polygon key={i} points={p} fill={OCEAN} />
      ))}
      <g fill="none" stroke="#40403d" strokeWidth="3">
        {SOLID.map((p, i) => (
          <polyline key={i} points={p} />
        ))}
      </g>
      <g fill="none" stroke="#3f413f" strokeWidth="3" strokeDasharray="12 8">
        {DASHED.map((p, i) => (
          <polyline key={i} points={p} />
        ))}
      </g>
      <g fill="none" stroke="#231d20" strokeWidth="4" strokeDasharray="36 12">
        <polyline points={DATELINE} />
        <polyline points={EXCLAVE} />
      </g>
      <g fill="none" stroke="#2f3440" strokeWidth="6" strokeDasharray="36 12">
        <path d="M630 930V1895" />
        <path d="M0 1866H4098" />
      </g>
      <g fill="#2c3a4b" fontSize="69" textAnchor="middle" letterSpacing="12">
        {SEAS.map(([t, x, y, s], i) => (
          <text key={i} x={x + TILE[t][0]} y={y + TILE[t][1]}>
            {s}
          </text>
        ))}
      </g>
      <g fill="#111" stroke="#63625c" strokeWidth="16" strokeLinejoin="round" paintOrder="stroke" fontSize="54" fontWeight="500">
        {LABELS.map(([t, x, y, s, a = "middle"], i) => (
          <text key={i} x={x + TILE[t][0]} y={y + TILE[t][1]} textAnchor={a}>
            {s}
          </text>
        ))}
      </g>
      <g fill="#fff" fillOpacity=".5" fontFamily="Liberation Sans, Arial, sans-serif" fontSize="90">
        {[-765, 771, 2307, 3843].map((x) => (
          <text key={x} x={x} y="1130" textLength="1264">
            For development purposes only
          </text>
        ))}
      </g>
      {[2241, 2835].map((x) => (
        <g key={x} transform={`translate(${x} 980)`}>
          <path
            d="M0-77c43 0 78 34 78 77 0 28-11 48-28 74C30 105 16 132 11 164c-1 8-4 11-11 11s-10-3-11-11c-5-32-19-59-39-90C-67 48-78 28-78 0c0-43 35-77 78-77z"
            fill="#dc5240"
            stroke="#fff"
            strokeWidth="6"
          />
          <circle r="27" fill="#7a1f17" />
        </g>
      ))}
      <g fontFamily="Lato, sans-serif" fontSize="122" fontWeight="700" stroke="#b2bfcc" strokeWidth="26" strokeLinejoin="round" paintOrder="stroke">
        {(
          [
            ["G", 57, "#4f86ec"],
            ["o", 149, "#dc5240"],
            ["o", 214, "#f2bb40"],
            ["g", 283, "#4f86ec"],
            ["l", 345, "#5aa55b"],
            ["e", 368, "#dc5240"],
          ] as [string, number, string][]
        ).map(([ch, x, c], i) => (
          <text key={i} x={x} y="2084" fill={c}>
            {ch}
          </text>
        ))}
      </g>
    </svg>
  );
}

function MapButton({ children }: { children: ReactNode }) {
  return <button className="flex h-20 w-20 items-center justify-center">{children}</button>;
}

function SightingsMap() {
  return (
    <div className="relative h-[700px] w-[1460px] overflow-hidden">
      <MapCanvas />
      <div className="absolute top-5 right-5 rounded bg-white shadow-md">
        <MapButton>
          <svg className="h-9 w-9" viewBox="0 0 36 36" fill="none" stroke="#666" strokeWidth="4">
            <path d="M2 12V2h10M24 2h10v10M34 24v10H24M12 34H2V24" />
          </svg>
        </MapButton>
      </div>
      <div className="absolute right-5 bottom-12 flex flex-col items-center rounded bg-white shadow-md">
        <MapButton>
          <svg className="h-9 w-9" viewBox="0 0 36 36" fill="#666">
            <path d="M14 0h8v14h14v8H22v14h-8V22H0v-8h14z" />
          </svg>
        </MapButton>
        <div className="h-0.5 w-[60px] bg-[#e6e6e6]" />
        <MapButton>
          <svg className="h-9 w-9" viewBox="0 0 36 36" fill="#666">
            <path d="M0 14h36v8H0z" />
          </svg>
        </MapButton>
      </div>
      <div className="absolute right-0 bottom-0 flex h-7 w-[314px] items-center justify-between bg-[#f5f5f5]/70 pr-[13px] pb-0.5 pl-[9px] font-[Roboto] text-[20px] leading-[26px] text-[#444]">
        <span>Map data ©2020</span>
        <span>Terms of Use</span>
      </div>
    </div>
  );
}

function Toolbar() {
  return (
    <header className="flex h-[70px] items-start border-b-2 border-[#dadce0] bg-white pt-1 pl-[18px]">
      <div className="flex h-14 w-[2478px] items-center rounded-full bg-[#f1f3f4] pr-[19px] pl-[20px] font-[Roboto] text-[28px]">
        <MdInfoOutline className="h-8 w-8 text-[#5f6368]" />
        <span className="ml-4 text-[#202124]">localhost</span>
        <span className="grow tracking-[0.576px] text-[#6a6d70]">:8080/SuperheroSightings/</span>
        <MdStarBorder className="h-[34px] w-[34px] text-[#5f6368]" />
      </div>
      <div className="ml-7 flex h-14 items-center gap-8">
        <div className="flex h-8 w-8 items-center justify-center bg-[#5bc83b] [clip-path:polygon(30%_0,70%_0,100%_30%,100%_70%,70%_100%,30%_100%,0_70%,0_30%)]">
          <MdThumbUp className="h-[22px] w-[22px] text-white" />
        </div>
        <svg className="h-8 w-8" viewBox="0 0 32 32">
          <defs>
            <linearGradient id="red" x2="0" y2="1">
              <stop stopColor="#ea4a48" />
              <stop offset="1" stopColor="#a31a18" />
            </linearGradient>
          </defs>
          <path d="M5 4.300Q16 3 27 4.300q4 .4 4.400 4.400q1 7.300 0 14.600Q31 27.300 27 27.700q-11 1.300-22 0Q1 27.300 .6 23.300q-1-7.300 0-14.600Q1 4.700 5 4.300z" fill="url(#red)" />
          <path d="M9 11l7 5-7 5zM16 11l8 5-8 5z" fill="#fff" />
        </svg>
        <div className="relative h-8 w-8 bg-[#ee5a2a] font-['Liberation_Serif'] text-[#fbd0b8]">
          <span className="absolute top-[5px] left-[1px] text-[15px] leading-[15px]">CO</span>
          <span className="absolute -top-[3px] right-[2px] text-[12px] leading-[15px]">m</span>
          <span className="absolute top-[18px] left-[1px] text-[15px] leading-[15px]">E</span>
          <span className="absolute top-[18px] left-[6px] h-[27px] w-[40px] rounded-md bg-white" />
          <span className="absolute top-5 left-2 flex h-6 w-9 items-center justify-center rounded bg-[#808080] pt-0.5 font-[Roboto] text-[19px] leading-6 font-medium text-white">
            off
          </span>
        </div>
        <svg className="h-8 w-8" viewBox="0 0 32 32">
          <circle cx="16" cy="16" r="15" fill="#e8793a" />
          <g stroke="#fff" strokeWidth="1.5" fill="#fff">
            <path d="M10 10l12 12M22 10L10 22" />
            <circle cx="16" cy="16" r="4" />
            <circle cx="22.5" cy="9.5" r="1.5" />
            <circle cx="9.5" cy="22.5" r="1.5" />
            <path d="M6.500 12l5.500-5M20 25l5.500-5" strokeWidth="3.500" />
          </g>
        </svg>
        <MdExtension className="-mx-px h-[34px] w-[34px] text-[#5f6368]" />
      </div>
      <div className="mt-1.5 ml-[26px] flex h-11 w-11 items-center justify-center rounded-full bg-[#1d5998] font-[Roboto] text-[25px] text-white">
        M
      </div>
    </header>
  );
}

const TABS = [
  { name: "Sightings", tracking: "tracking-[0.2px]" },
  { name: "Superheroes", tracking: "tracking-[-0.12px]" },
  { name: "Organizations", tracking: "tracking-[-0.06px]" },
  { name: "Locations", tracking: "tracking-[0.24px]" },
  { name: "Superpowers", tracking: "tracking-[0.09px]" },
];

const FEED = [
  ["SEPTEMBER 4, 2020", "Mom's house", "Cat Woman"],
  ["AUGUST 18, 2020", "The market", "The flash"],
];

export default function App() {
  return (
    <div className="min-h-[1712px] w-[2890px] bg-white font-['Liberation_Sans',Arial,sans-serif] text-[28px] leading-10 text-[#333]">
      <Toolbar />
      <main className="ml-[246px] w-[2280px]">
        <h1 className="-ml-px pt-[41px] pb-[37px] text-[72px] leading-[80px] tracking-[1.08px] [-webkit-text-stroke:2.4px_#333]">Superhero Sightings</h1>
        <hr className="border-t-2 border-[#eee]" />
        <nav className="mx-0.5 mt-[42px] flex h-[84px] gap-1 border-b-2 border-[#ddd]">
          <a className="h-[84px] w-[137px] rounded-t-lg border-2 border-b-0 border-[#ddd] bg-white pt-[21px] pl-[29px] tracking-[-0.17px] text-[#555]">
            Home
          </a>
          {TABS.map((t) => (
            <a key={t.name} className={`px-8 pt-[23px] text-[#337ab7] ${t.tracking}`}>
              {t.name}
            </a>
          ))}
        </nav>
        <section className="mt-[54px] flex">
          <div className="w-[790px] pt-5 pl-[29px] whitespace-nowrap">
            <h4 className="mb-[19px] text-[36px] leading-10 tracking-[-0.31px] [-webkit-text-stroke:1.2px_#333]">ABOUT SUPERHERO SIGHTINGS:</h4>
            <p className="mb-5 tracking-[0.11px]">
              Record all hero sightings! Track their most frequent
              <br />
              locations, their organizations, and superpower abilities.
            </p>
            <p className="tracking-[0.11px]">
              Upload images of your favorite superhero whether their
              <br />
              saving a fellow citizen from crime or at the grocery
              <br />
              store. See their most recent sightings displayed on our
              <br />
              map. Keep track of every detail of your heroes (or
              <br />
              villians)!
            </p>
          </div>
          <SightingsMap />
        </section>
        <table className="w-full table-fixed border-collapse text-left">
          <caption className="-ml-px pt-[17px] pb-[15px] text-left text-[#777]">Sightings News Feed:</caption>
          <colgroup>
            <col className="w-[919px]" />
            <col className="w-[626px]" />
            <col />
          </colgroup>
          <thead>
            <tr className="h-[74px] border-b-4 border-[#ddd]">
              {["Date", "Location", "Heroes Sighted"].map((h) => (
                <th key={h} className="px-4 pt-0.5 font-bold first:pl-[15px]">
                  {h}
                </th>
              ))}
            </tr>
          </thead>
          <tbody>
            {FEED.map((row, i) => (
              <tr key={row[0]} className={i === 0 ? "h-[75px] bg-[#f9f9f9]" : "h-[74px] border-t-2 border-[#ddd]"}>
                {row.map((c) => (
                  <td key={c} className="px-4 pt-px first:pl-[15px] first:tracking-[-0.28px]">
                    {c}
                  </td>
                ))}
              </tr>
            ))}
          </tbody>
        </table>
      </main>
    </div>
  );
}
